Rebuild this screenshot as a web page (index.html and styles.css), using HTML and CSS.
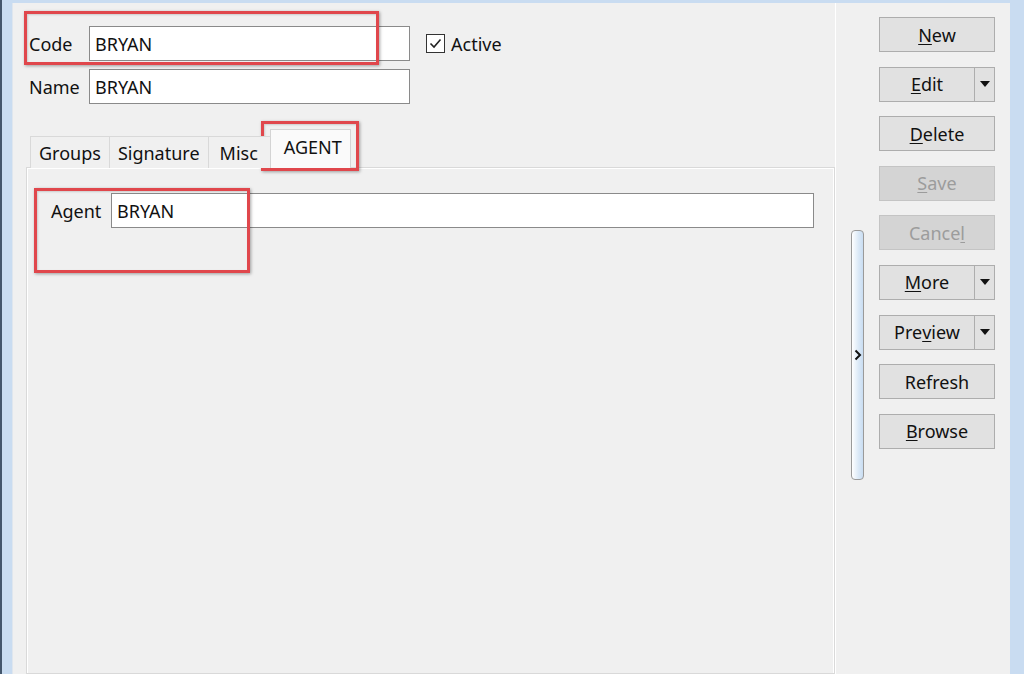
FILE: index.html
```html
<!DOCTYPE html>
<html>
<head>
  <title>Agent</title>
  <link rel="stylesheet" href="styles.css">
</head>
<body>
  <div class="window">
    <div class="client">
      <div class="main">
        <div class="field-row">
          <div class="field-label">Code</div>
          <div class="text-input">BRYAN</div>
          <div class="check">
            <span class="check-box">
              <svg width="15" height="15" viewBox="0 0 15 15"><path d="M2.5 7.5 L6 11 L12.5 3.5" fill="none" stroke="#222" stroke-width="1.6"/></svg>
            </span>
            Active
          </div>
        </div>
        <div class="field-row">
          <div class="field-label">Name</div>
          <div class="text-input">BRYAN</div>
        </div>

        <div class="tabs">
          <div class="tab">Groups</div>
          <div class="tab">Signature</div>
          <div class="tab tab-misc">Misc</div>
          <div class="tab tab-active">AGENT</div>
        </div>
        <div class="tab-panel">
          <div class="panel-row">
            <div class="panel-label">Agent</div>
            <div class="text-input wide">BRYAN</div>
          </div>
        </div>
      </div>

      <div class="side">
        <div class="slider">
          <svg width="8" height="12" viewBox="0 0 8 12"><path d="M1.5 1.5 L6 6 L1.5 10.5" fill="none" stroke="#111" stroke-width="2"/></svg>
        </div>
        <div class="buttons">
          <div class="btn"><u>N</u>ew</div>
          <div class="btn btn-split"><span class="btn-main"><u>E</u>dit</span><span class="btn-arrow"></span></div>
          <div class="btn"><u>D</u>elete</div>
          <div class="btn btn-disabled"><u>S</u>ave</div>
          <div class="btn btn-disabled">Cance<u>l</u></div>
          <div class="btn btn-split"><span class="btn-main"><u>M</u>ore</span><span class="btn-arrow"></span></div>
          <div class="btn btn-split"><span class="btn-main">Pre<u>v</u>iew</span><span class="btn-arrow"></span></div>
          <div class="btn">Refresh</div>
          <div class="btn"><u>B</u>rowse</div>
        </div>
      </div>
    </div>

    <!-- red annotation boxes -->
    <div class="mark mark-code"></div>
    <div class="mark mark-tab"></div>
    <div class="mark mark-agent"></div>
  </div>
</body>
</html>
```

FILE: styles.css
```css
html, body {
  margin: 0;
  height: 100%;
  overflow: hidden;
}

body {
  font-family: "Noto Sans", "DejaVu Sans", sans-serif;
  font-size: 18px;
  color: #111;
  background: #f0f0f0;
}

.window {
  position: relative;
  height: 674px;
  display: flex;
  border-left: 2px solid #44566c;
  background: #c9dcf1;
  padding: 3px 14px 0 10px;
  box-sizing: border-box;
}

.client {
  flex: 1;
  display: flex;
  background: #f0f0f0;
  border-left: 1px solid #dfe6ee;
}

.main {
  width: 822px;
  display: flex;
  flex-direction: column;
  padding-top: 23px;
}

.field-row {
  display: flex;
  align-items: center;
  height: 35px;
  margin-bottom: 8px;
  padding-left: 16px;
}

.field-label {
  width: 60px;
}

.text-input {
  width: 321px;
  height: 35px;
  box-sizing: border-box;
  border: 1px solid #8a8a8a;
  background: #fff;
  padding-left: 5px;
  display: flex;
  align-items: center;
}

.check {
  display: flex;
  align-items: center;
  margin-left: 16px;
}

.check-box {
  width: 19px;
  height: 19px;
  box-sizing: border-box;
  border: 1px solid #333;
  background: #fff;
  display: flex;
  align-items: center;
  justify-content: center;
  margin-right: 6px;
}

.tabs {
  display: flex;
  align-items: flex-end;
  margin-top: 17px;
  padding-left: 17px;
  margin-bottom: -1px;
  position: relative;
  z-index: 1;
}

.tab {
  height: 32px;
  box-sizing: border-box;
  padding: 0 8px;
  display: flex;
  align-items: center;
  border: 1px solid #d9d9d9;
  border-bottom: none;
  border-right: none;
  background: #f0f0f0;
}

.tab-misc {
  padding: 0 14px 0 11px;
}

.tab-active {
  height: 39px;
  padding: 0 8px 4px 13px;
  background: #fafafa;
  border: 1px solid #d4d4d4;
  border-bottom: none;
  margin-left: -2px;
}

.tab-panel {
  flex: 1;
  margin-left: 13px;
  border: 1px solid #d9d9d9;
  box-shadow: inset 1px 1px 0 #fff, inset -1px 0 0 #fff;
  background: #f0f0f0;
  padding: 25px 20px 0 24px;
}

.panel-row {
  display: flex;
  align-items: center;
}

.panel-label {
  width: 60px;
}

.text-input.wide {
  flex: 1;
  width: auto;
}

.side {
  flex: 1;
  display: flex;
  border-left: 1px solid #fff;
}

.slider {
  width: 13px;
  height: 250px;
  margin: 227px 15px 0 15px;
  box-sizing: border-box;
  border: 1px solid #9a9a9a;
  border-radius: 4px;
  background: linear-gradient(to right, #ffffff, #dbe9f7 60%, #c9ddf2);
  display: flex;
  align-items: center;
  justify-content: center;
}

.buttons {
  display: flex;
  flex-direction: column;
  gap: 14.6px;
  margin-top: 14px;
}

.btn {
  width: 116px;
  height: 35px;
  box-sizing: border-box;
  border: 1px solid #adadad;
  background: #e1e1e1;
  display: flex;
  align-items: center;
  justify-content: center;
}

.btn u {
  text-underline-offset: 2px;
}

.btn-disabled {
  background: #d4d4d4;
  border-color: #c4c4c4;
  color: #9c9c9c;
}

.btn-split {
  justify-content: flex-start;
}

.btn-main {
  width: 94px;
  height: 100%;
  border-right: 1px solid #adadad;
  display: flex;
  align-items: center;
  justify-content: center;
}

.btn-arrow {
  flex: 1;
  height: 100%;
  display: flex;
  align-items: center;
  justify-content: center;
}

.btn-arrow::after {
  content: "";
  border-left: 5px solid transparent;
  border-right: 5px solid transparent;
  border-top: 6px solid #111;
}

.mark {
  position: absolute;
  border: 3px solid #e0474c;
  box-shadow: 1px 1px 3px rgba(0, 0, 0, 0.35), inset 1px 1px 2px rgba(0, 0, 0, 0.15);
  box-sizing: border-box;
}

.mark-code {
  left: 22px;
  top: 11px;
  width: 355px;
  height: 54px;
}

.mark-tab {
  left: 259px;
  top: 121px;
  width: 98px;
  height: 50px;
}

.mark-agent {
  left: 32px;
  top: 188px;
  width: 216px;
  height: 85px;
}
```
